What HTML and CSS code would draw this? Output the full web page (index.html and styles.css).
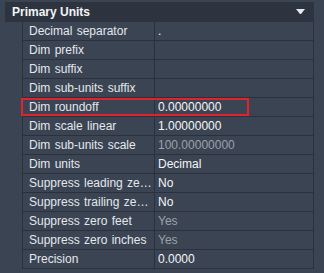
FILE: index.html
```
<!DOCTYPE html>
<html lang="en">
<head>
    <meta charset="UTF-8">
    <title>Primary Units</title>
    <link rel="stylesheet" href="styles.css">
</head>
<body>

<div class="panel">
    <div class="panel-header">
        <span>Primary Units</span>
        <svg class="caret" width="9" height="5" viewBox="0 0 9 5"><path d="M0 0H9L5 5H4Z" fill="#e6e9ee"/></svg>
    </div>

    <div class="props">
        <div class="row"><div class="name">Decimal separator</div><div class="value">.</div></div>
        <div class="row"><div class="name">Dim prefix</div><div class="value"></div></div>
        <div class="row"><div class="name">Dim suffix</div><div class="value"></div></div>
        <div class="row"><div class="name">Dim sub-units suffix</div><div class="value"></div></div>
        <div class="row selected"><div class="name">Dim roundoff</div><div class="value">0.00000000</div></div>
        <div class="row"><div class="name">Dim scale linear</div><div class="value">1.00000000</div></div>
        <div class="row"><div class="name">Dim sub-units scale</div><div class="value disabled">100.00000000</div></div>
        <div class="row"><div class="name">Dim units</div><div class="value">Decimal</div></div>
        <div class="row"><div class="name">Suppress leading zeros</div><div class="value">No</div></div>
        <div class="row"><div class="name">Suppress trailing zeros</div><div class="value">No</div></div>
        <div class="row"><div class="name">Suppress zero feet</div><div class="value disabled">Yes</div></div>
        <div class="row"><div class="name">Suppress zero inches</div><div class="value disabled">Yes</div></div>
        <div class="row"><div class="name">Precision</div><div class="value">0.0000</div></div>
    </div>
</div>

</body>
</html>
```

FILE: styles.css
```
body {
    margin: 0;
    background-color: #3b4452;
    font-family: "Liberation Sans", Arial, sans-serif;
    font-size: 12px;
    color: #e3e8ee;
}
.panel {
    margin: 2px 10px 0 5px;
}
.panel-header {
    display: flex;
    justify-content: space-between;
    align-items: center;
    height: 20px;
    padding: 0 9px 0 7px;
    background-color: #2e343f;
    font-weight: bold;
    color: #f2f4f7;
}
.caret {
    margin-top: -2px;
}
.props {
    margin-left: 17px;
    border-left: 1px solid #2b313b;
    border-right: 1px solid #2b313b;
}
.row {
    display: grid;
    grid-template-columns: 132px 1fr;
    height: 18px;
    border-bottom: 1px solid #2b313b;
    position: relative;
}
.name, .value {
    line-height: 19px;
    white-space: nowrap;
    overflow: hidden;
}
.name {
    padding: 0 2px 0 6px;
    border-right: 1px solid #2b313b;
    word-spacing: 1px;
    text-overflow: ellipsis;
}
.value {
    padding-left: 3px;
    color: #f4f6f8;
}
.value.disabled {
    color: #9ba2ab;
}
.selected::after {
    content: "";
    position: absolute;
    left: -2px;
    top: 0;
    width: 224px;
    height: 14px;
    border: 2px solid #e0232d;
    pointer-events: none;
}
```
